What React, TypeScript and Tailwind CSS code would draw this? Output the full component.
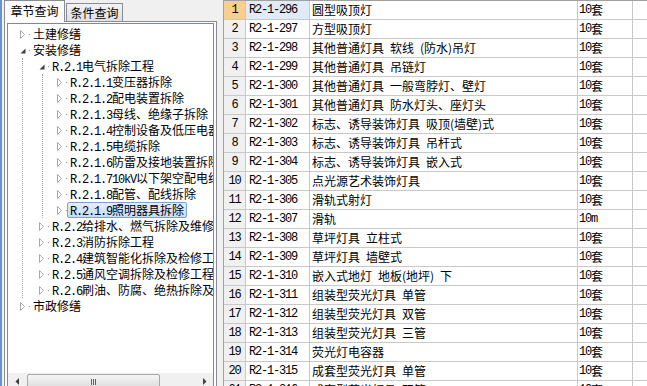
import React from "react";

const cjk = "font-['Noto_Sans_CJK_SC',sans-serif]";
const mono = "font-['Liberation_Mono',monospace] text-[12px] leading-[14px] tracking-[-1.2px]";

//------------------------------------------------------------
// \u2002 = en space, same width as the half-width space in the original
const rows = [
    { no: 1, code: "R2-1-296", name: "圆型吸顶灯", unit: "套" },
    { no: 2, code: "R2-1-297", name: "方型吸顶灯", unit: "套" },
    { no: 3, code: "R2-1-298", name: "其他普通灯具\u2002软线\u2002(防水)吊灯", unit: "套" },
    { no: 4, code: "R2-1-299", name: "其他普通灯具\u2002吊链灯", unit: "套" },
    { no: 5, code: "R2-1-300", name: "其他普通灯具\u2002一般弯脖灯、壁灯", unit: "套" },
    { no: 6, code: "R2-1-301", name: "其他普通灯具\u2002防水灯头、座灯头", unit: "套" },
    { no: 7, code: "R2-1-302", name: "标志、诱导装饰灯具\u2002吸顶(墙壁)式", unit: "套" },
    { no: 8, code: "R2-1-303", name: "标志、诱导装饰灯具\u2002吊杆式", unit: "套" },
    { no: 9, code: "R2-1-304", name: "标志、诱导装饰灯具\u2002嵌入式", unit: "套" },
    { no: 10, code: "R2-1-305", name: "点光源艺术装饰灯具", unit: "套" },
    { no: 11, code: "R2-1-306", name: "滑轨式射灯", unit: "套" },
    { no: 12, code: "R2-1-307", name: "滑轨", unit: "m" },
    { no: 13, code: "R2-1-308", name: "草坪灯具\u2002立柱式", unit: "套" },
    { no: 14, code: "R2-1-309", name: "草坪灯具\u2002墙壁式", unit: "套" },
    { no: 15, code: "R2-1-310", name: "嵌入式地灯\u2002地板(地坪)\u2002下", unit: "套" },
    { no: 16, code: "R2-1-311", name: "组装型荧光灯具\u2002单管", unit: "套" },
    { no: 17, code: "R2-1-312", name: "组装型荧光灯具\u2002双管", unit: "套" },
    { no: 18, code: "R2-1-313", name: "组装型荧光灯具\u2002三管", unit: "套" },
    { no: 19, code: "R2-1-314", name: "荧光灯电容器", unit: "套" },
    { no: 20, code: "R2-1-315", name: "成套型荧光灯具\u2002单管", unit: "套" },
    { no: 21, code: "R2-1-316", name: "成套型荧光灯具\u2002双管", unit: "套" },
];

//------------------------------------------------------------
function Arrow({ open }: { open?: boolean }) {
    if (open)
        return (
            <svg width="6" height="6" viewBox="0 0 6 6" className="mt-[2px]">
                <polygon points="5.5,0.5 5.5,5.5 0.5,5.5" fill="#404040" />
            </svg>
        );
    return (
        <svg width="6" height="9" viewBox="0 0 6 9">
            <polygon points="0.5,0.5 4.5,4.5 0.5,8.5" fill="#ffffff" stroke="#a8a8a8" />
        </svg>
    );
}

function TreeRow({
    pl,
    code,
    name,
    open,
    selected,
}: {
    pl: string;
    code?: string;
    name: React.ReactNode;
    open?: boolean;
    selected?: boolean;
}) {
    return (
        <div className={`flex h-[16px] items-center ${pl}`}>
            <span className="flex w-[6px] shrink-0 justify-center">
                <Arrow open={open} />
            </span>
            <span className="ml-[3px] h-[1px] w-[1px] shrink-0 bg-[#a0a0a0]" />
            <span
                className={`h-[16px] whitespace-nowrap rounded-[2px] border px-[2px] leading-[14px] ${
                    selected
                        ? "border-[#7da2ce] bg-linear-to-b from-[#e4effd] to-[#c4dcfc]"
                        : "border-transparent"
                }`}
            >
                {code && <span className={mono}>{code}</span>}
                {name}
            </span>
        </div>
    );
}

function ScrollArrow({ left }: { left?: boolean }) {
    return (
        <div className="flex w-[17px] shrink-0 items-center justify-center">
            <svg width="4" height="7" viewBox="0 0 4 7">
                <polygon points={left ? "4,0 4,7 0.5,3.5" : "0,0 0,7 3.5,3.5"} fill="#404040" />
            </svg>
        </div>
    );
}

//------------------------------------------------------------
export default function App() {
    return (
        <div className={`flex h-[386px] w-[647px] overflow-hidden bg-[#f0f0f0] text-[12px] text-black ${cjk}`}>
            {/* LEFT: TREE PANEL */}
            <div className="flex h-[393px] w-[217px] shrink-0 flex-col border-l-2 border-[#6b93c4] pl-[2px]">
                <div className="relative z-10 -mb-[1px] flex h-[22px] items-end">
                    <div className="flex h-[22px] w-[61px] items-center justify-center border border-b-0 border-[#898c95] bg-[#fcfcfc] pb-[1px]">
                        章节查询
                    </div>
                    <div className="ml-[1px] flex h-[19px] w-[57px] items-center justify-center border border-[#898c95] bg-linear-to-b from-[#f2f2f2] to-[#e0e0e0]">
                        条件查询
                    </div>
                </div>
                <div className="flex flex-1 flex-col border border-[#898c95] bg-[#fcfcfc] px-[2px] pt-[1px] pb-[1px]">
                    <div className="flex flex-1 flex-col border border-[#828790] bg-white">
                        <div className="flex-1 overflow-hidden pt-[2px]">
                            <TreeRow pl="pl-[12px]" name="土建修缮" />
                            <TreeRow pl="pl-[12px]" name="安装修缮" open />
                            <div className="ml-[14px] border-l border-dotted border-[#a0a0a0]">
                                <TreeRow pl="pl-[16px]" code="R.2.1" name="电气拆除工程" open />
                                <div className="ml-[19px] border-l border-dotted border-[#a0a0a0]">
                                    <TreeRow pl="pl-[14px]" code="R.2.1.1" name="变压器拆除" />
                                    <TreeRow pl="pl-[14px]" code="R.2.1.2" name="配电装置拆除" />
                                    <TreeRow pl="pl-[14px]" code="R.2.1.3" name="母线、绝缘子拆除" />
                                    <TreeRow pl="pl-[14px]" code="R.2.1.4" name="控制设备及低压电器拆除" />
                                    <TreeRow pl="pl-[14px]" code="R.2.1.5" name="电缆拆除" />
                                    <TreeRow pl="pl-[14px]" code="R.2.1.6" name="防雷及接地装置拆除" />
                                    <TreeRow
                                        pl="pl-[14px]"
                                        code="R.2.1.7"
                                        name={
                                            <>
                                                <span className={mono}>10kV</span>以下架空配电线路拆除
                                            </>
                                        }
                                    />
                                    <TreeRow pl="pl-[14px]" code="R.2.1.8" name="配管、配线拆除" />
                                    <TreeRow pl="pl-[14px]" code="R.2.1.9" name="照明器具拆除" selected />
                                </div>
                                <TreeRow pl="pl-[16px]" code="R.2.2" name="给排水、燃气拆除及维修工程" />
                                <TreeRow pl="pl-[16px]" code="R.2.3" name="消防拆除工程" />
                                <TreeRow pl="pl-[16px]" code="R.2.4" name="建筑智能化拆除及检修工程" />
                                <TreeRow pl="pl-[16px]" code="R.2.5" name="通风空调拆除及检修工程" />
                                <TreeRow pl="pl-[16px]" code="R.2.6" name="刷油、防腐、绝热拆除及维修工程" />
                            </div>
                            <TreeRow pl="pl-[12px]" name="市政修缮" />
                        </div>

                        {/* HORIZONTAL SCROLLBAR */}
                        <div className="flex h-[17px] shrink-0 bg-[#f0f0f0]">
                            <ScrollArrow left />
                            <div className="flex flex-1 items-center py-[1px]">
                                <div className="ml-[2px] flex h-full w-[133px] items-center justify-center rounded-[2px] border border-[#a8a8a8] bg-linear-to-b from-[#f4f4f4] to-[#dedede]">
                                    <div className="flex gap-[1px]">
                                        <span className="h-[6px] w-[1px] bg-[#606060]" />
                                        <span className="h-[6px] w-[1px] bg-[#606060]" />
                                        <span className="h-[6px] w-[1px] bg-[#606060]" />
                                    </div>
                                </div>
                            </div>
                            <ScrollArrow />
                        </div>
                    </div>
                </div>
            </div>

            {/* SPLITTER */}
            <div className="w-[6px] shrink-0" />

            {/* RIGHT: GRID */}
            <div className="flex-1 border-t border-l border-[#a0a0a0] bg-white">
                {rows.map((r) => (
                    <div key={r.no} className="flex h-[19px] border-b border-[#c8c8c8] leading-[16px]">
                        <div
                            className={`flex w-[22px] shrink-0 items-center justify-center border-r border-[#c8c8c8] ${
                                r.no === 1 ? "bg-[#f9cf8f]" : "bg-[#f0f0f0]"
                            }`}
                        >
                            <span className={mono}>{r.no}</span>
                        </div>
                        <div
                            className={`flex w-[64px] shrink-0 items-center border-r border-[#c8c8c8] pl-[3px] ${
                                r.no === 1 ? "bg-[#e1ebf8]" : ""
                            }`}
                        >
                            <span className={mono}>{r.code}</span>
                        </div>
                        <div className="flex w-[268px] shrink-0 items-center overflow-hidden whitespace-pre border-r border-[#c8c8c8] pl-[2px]">
                            {r.name}
                        </div>
                        <div className="flex w-[55px] shrink-0 items-center whitespace-nowrap border-r border-[#c8c8c8] pl-[1px]">
                            <span className={mono}>{r.unit === "m" ? "10m" : "10"}</span>
                            {r.unit === "m" ? "" : r.unit}
                        </div>
                        <div className="flex-1" />
                    </div>
                ))}
            </div>
        </div>
    );
}
